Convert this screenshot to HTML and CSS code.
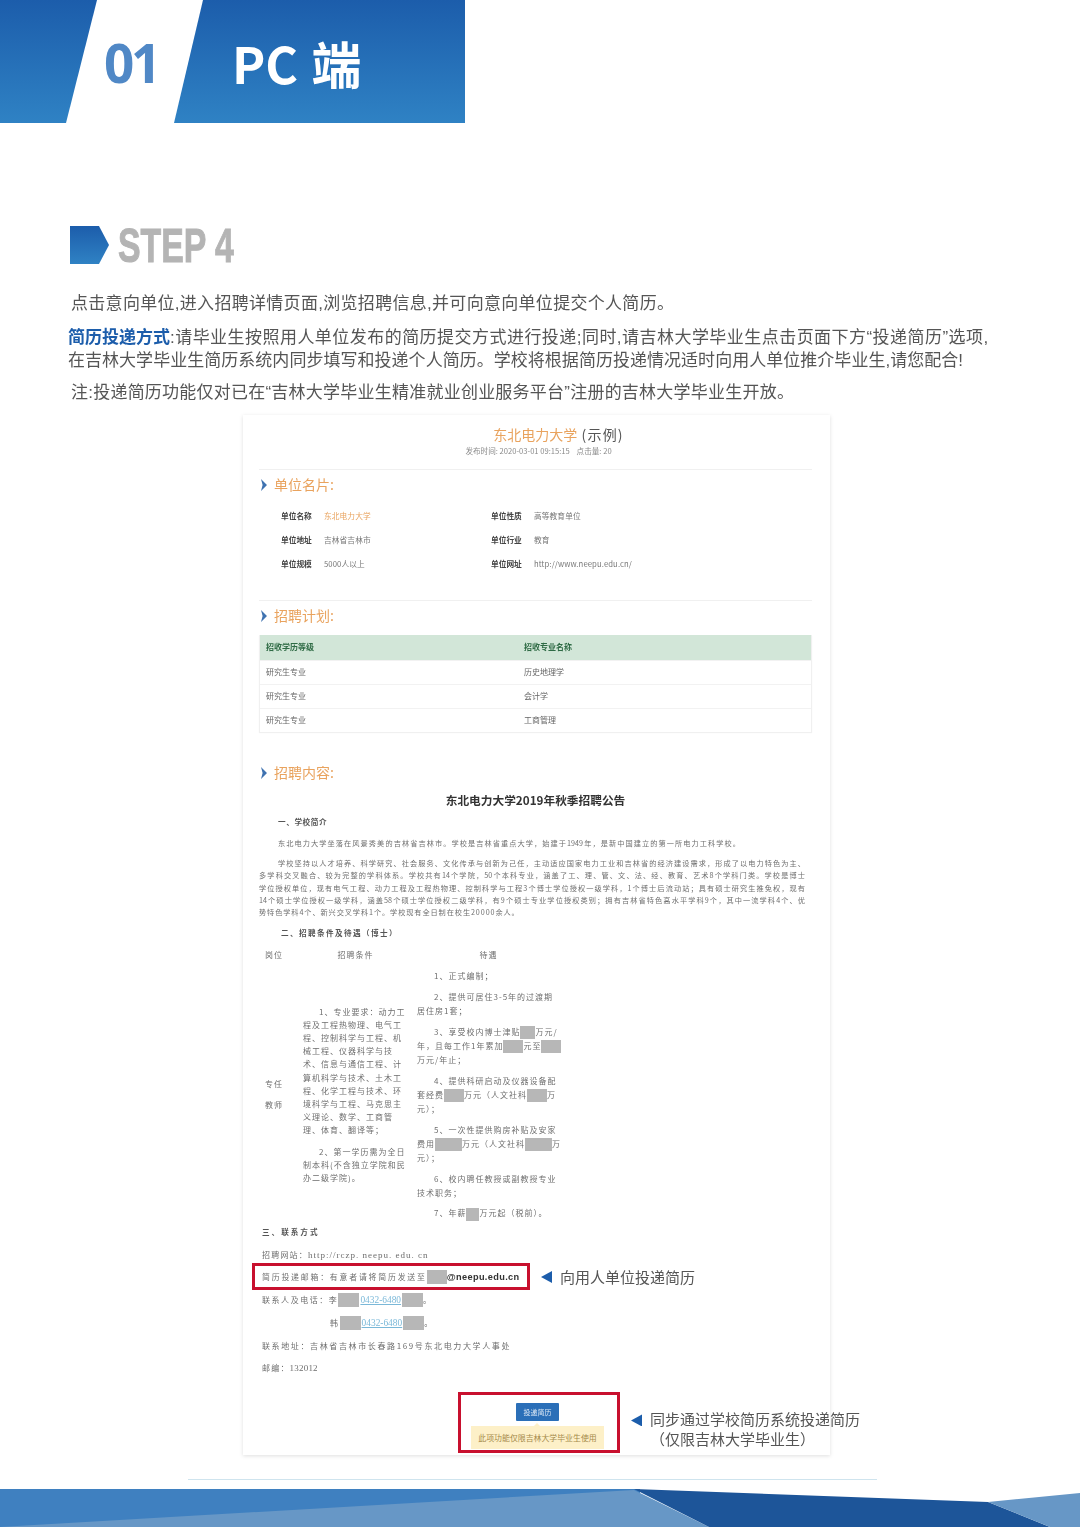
FILE: index.html
```html
<!DOCTYPE html>
<html lang="zh-CN">
<head>
<meta charset="utf-8">
<title>PC 端 STEP 4</title>
<link rel="stylesheet" href="styles.css">
</head>
<body>
<header class="banner">
  <div class="seg-left"></div>
  <div class="seg-num">01</div>
  <div class="seg-title">PC 端</div>
</header>

<div class="step">
  <div class="step-mark"></div>
  <div class="step-text">STEP 4</div>
</div>

<section class="intro">
  <p class="p1">点击意向单位,进入招聘详情页面,浏览招聘信息,并可向意向单位提交个人简历。</p>
  <p class="p2"><span class="l1"><b>简历投递方式</b>:请毕业生按照用人单位发布的简历提交方式进行投递;同时,请吉林大学毕业生点击页面下方“投递简历”选项,</span><br><span class="l2">在吉林大学毕业生简历系统内同步填写和投递个人简历。学校将根据简历投递情况适时向用人单位推介毕业生,请您配合!</span></p>
  <p class="p3">注:投递简历功能仅对已在“吉林大学毕业生精准就业创业服务平台”注册的吉林大学毕业生开放。</p>
</section>

<main class="card">
  <div class="title"><span class="org">东北电力大学</span><span class="ex"> (示例)</span></div>
  <div class="meta">发布时间: 2020-03-01 09:15:15 &nbsp;&nbsp; 点击量: 20</div>
  <hr class="rule r1">

  <h2 class="sec s1"><svg class="chev" viewBox="0 0 6 12"><path d="M0 0 L6 6 L0 12 L1.6 6 Z"/></svg>单位名片:</h2>
  <div class="info">
    <span class="k">单位名称</span><span class="v org">东北电力大学</span><span class="k">单位性质</span><span class="v">高等教育单位</span>
    <span class="k">单位地址</span><span class="v">吉林省吉林市</span><span class="k">单位行业</span><span class="v">教育</span>
    <span class="k">单位规模</span><span class="v">5000人以上</span><span class="k">单位网址</span><span class="v">http://www.neepu.edu.cn/</span>
  </div>
  <hr class="rule r2">

  <h2 class="sec s1"><svg class="chev" viewBox="0 0 6 12"><path d="M0 0 L6 6 L0 12 L1.6 6 Z"/></svg>招聘计划:</h2>
  <div class="plan">
    <div class="plan-row plan-head"><span>招收学历等级</span><span>招收专业名称</span></div>
    <div class="plan-row"><span>研究生专业</span><span>历史地理学</span></div>
    <div class="plan-row"><span>研究生专业</span><span>会计学</span></div>
    <div class="plan-row"><span>研究生专业</span><span>工商管理</span></div>
  </div>

  <h2 class="sec s3"><svg class="chev" viewBox="0 0 6 12"><path d="M0 0 L6 6 L0 12 L1.6 6 Z"/></svg>招聘内容:</h2>
  <h3 class="doc-title">东北电力大学2019年秋季招聘公告</h3>
  <div class="doc-h h1">一、学校简介</div>
  <div class="doc-p one"><span class="ln first short1">东北电力大学坐落在风景秀美的吉林省吉林市。学校是吉林省重点大学&#xFF0C;始建于1949年&#xFF0C;是新中国建立的第一所电力工科学校。</span></div>
  <div class="doc-p many">
    <div class="ln first">学校坚持以人才培养、科学研究、社会服务、文化传承与创新为己任&#xFF0C;主动适应国家电力工业和吉林省的经济建设需求&#xFF0C;形成了以电力特色为主、</div>
    <div class="ln">多学科交叉融合、较为完整的学科体系。学校共有14个学院&#xFF0C;50个本科专业&#xFF0C;涵盖了工、理、管、文、法、经、教育、艺术8个学科门类。学校是博士</div>
    <div class="ln">学位授权单位&#xFF0C;现有电气工程、动力工程及工程热物理、控制科学与工程3个博士学位授权一级学科&#xFF0C;1个博士后流动站&#xFF1B;具有硕士研究生推免权&#xFF0C;现有</div>
    <div class="ln">14个硕士学位授权一级学科&#xFF0C;涵盖58个硕士学位授权二级学科&#xFF0C;有9个硕士专业学位授权类别&#xFF1B;拥有吉林省特色高水平学科9个&#xFF0C;其中一流学科4个、优</div>
    <div class="ln-last">势特色学科4个、新兴交叉学科1个。学校现有全日制在校生20000余人。</div>
  </div>
  <div class="doc-h h2">二、招聘条件及待遇&#xFF08;博士&#xFF09;</div>
  <div class="jobs jobs-head"><span class="c1">岗位</span><span class="c2">招聘条件</span><span class="c3">待遇</span></div>
  <div class="jobs jobs-body">
    <div class="c1"><div>专任</div><div>教师</div></div>
    <div class="c2">
      <div class="in">1、专业要求&#xFF1A;动力工</div>
      <div>程及工程热物理、电气工</div>
      <div>程、控制科学与工程、机</div>
      <div>械工程、仪器科学与技</div>
      <div>术、信息与通信工程、计</div>
      <div>算机科学与技术、土木工</div>
      <div>程、化学工程与技术、环</div>
      <div>境科学与工程、马克思主</div>
      <div>义理论、数学、工商管</div>
      <div>理、体育、翻译等&#xFF1B;</div>
      <div class="in gap">2、第一学历需为全日</div>
      <div>制本科(不含独立学院和民</div>
      <div>办二级学院)。</div>
    </div>
    <div class="c3">
      <p><span class="in">1、正式编制&#xFF1B;</span></p>
      <p><span class="in">2、提供可居住3-5年的过渡期</span><br>居住房1套&#xFF1B;</p>
      <p><span class="in">3、享受校内博士津贴<i class="rd w15"></i>万元/</span><br>年&#xFF0C;且每工作1年累加<i class="rd w20"></i>元至<i class="rd w20"></i><br>万元/年止&#xFF1B;</p>
      <p><span class="in">4、提供科研启动及仪器设备配</span><br>套经费<i class="rd w20"></i>万元&#xFF08;人文社科<i class="rd w20"></i>万<br>元&#xFF09;&#xFF1B;</p>
      <p><span class="in">5、一次性提供购房补贴及安家</span><br>费用<i class="rd w27"></i>万元&#xFF08;人文社科<i class="rd w27"></i>万<br>元&#xFF09;&#xFF1B;</p>
      <p><span class="in">6、校内聘任教授或副教授专业</span><br>技术职务&#xFF1B;</p>
      <p><span class="in">7、年薪<i class="rd w13"></i>万元起&#xFF08;税前&#xFF09;。</span></p>
    </div>
  </div>

  <div class="doc-h h3">三、联系方式</div>
  <div class="ct site">招聘网站&#xFF1A;<span class="lat">http://rczp. neepu. edu. cn</span></div>
  <div class="flag-row mail-row">
    <div class="mail-box">简历投递邮箱&#xFF1A;有意者请将简历发送至<i class="rd w20 tall"></i><b class="at">@neepu.edu.cn</b></div>
    <i class="tri"></i>
    <div class="note">向用人单位投递简历</div>
  </div>
  <div class="ct phone">联系人及电话&#xFF1A;李<i class="rd w21 tall"></i><a class="tel">0432-6480</a><i class="rd w21 tall"></i>。</div>
  <div class="ct phone p2nd">韩<i class="rd w21 tall"></i><a class="tel">0432-6480</a><i class="rd w21 tall"></i>。</div>
  <div class="ct addr">联系地址&#xFF1A;吉林省吉林市长春路169号东北电力大学人事处</div>
  <div class="ct zip">邮编&#xFF1A;<span class="lat zipno">132012</span></div>

  <div class="flag-row apply-row">
    <div class="apply-box">
      <div class="apply-btn">投递简历</div>
      <div class="apply-tip">此项功能仅限吉林大学毕业生使用</div>
    </div>
    <i class="tri up"></i>
    <div class="note two">同步通过学校简历系统投递简历<br>&#xFF08;仅限吉林大学毕业生&#xFF09;</div>
  </div>
</main>

<div class="foot-line"></div>
<svg class="footer" viewBox="0 0 1080 38" preserveAspectRatio="none">
  <rect width="640" height="38" fill="#3f80c0"/>
  <polygon points="0,38 634,1 709,38" fill="#6797c6"/>
  <polygon points="634,0 988,13 1050,38 709,38" fill="#1d5599"/>
  <polygon points="988,13 1080,4 1080,38 1050,38" fill="#6797c6"/>
</svg>
</body>
</html>
```
FILE: styles.css
```css
* { box-sizing: border-box; }
html, body { margin: 0; padding: 0; }
body {
  width: 1080px;
  height: 1527px;
  overflow: hidden;
  background: #fff;
  font-family: "Noto Sans CJK SC", "Noto Sans", sans-serif;
}
p, h2, h3, hr { margin: 0; padding: 0; font-weight: normal; }
i { font-style: normal; }

/* banner */
.banner { display: flex; width: 465px; height: 123px; }
.seg-left, .seg-title { background: linear-gradient(#1c5dab, #2f82c4); }
.seg-left { width: 97px; clip-path: polygon(0 0, 100% 0, 66px 100%, 0 100%); }
.seg-num {
  width: 77px;
  padding-left: 7px;
  font: 700 53px/126px "Open Sans", sans-serif;
  letter-spacing: -3.2px;
  color: #5088c6;
}
.seg-title {
  flex: 1;
  padding-left: 58px;
  clip-path: polygon(29px 0, 100% 0, 100% 100%, 0 100%);
  font: 700 50px/125px "Noto Sans CJK SC", sans-serif;
  word-spacing: 2px;
  color: #fff;
  white-space: pre;
}

/* step */
.step { display: flex; align-items: center; gap: 9px; margin: 103px 0 0 70px; height: 38px; }
.step-mark {
  width: 39px; height: 38px;
  background: linear-gradient(#1c5dab, #2f82c4);
  clip-path: polygon(0 0, 29px 0, 100% 50%, 29px 100%, 0 100%);
}
.step-text {
  font: 700 49px/38px "Liberation Sans", sans-serif;
  color: #b4b4b4;
  -webkit-text-stroke: 1px #b4b4b4;
  transform: scaleX(.69);
  transform-origin: left center;
  white-space: nowrap;
}

/* intro */
.intro {
  margin-top: 28px;
  font-family: "Liberation Sans", "Noto Sans CJK SC", sans-serif;
  font-size: 17px;
  line-height: 23px;
  color: #555;
  white-space: nowrap;
  filter: blur(0.3px);
}
.p1 { padding-left: 71px; letter-spacing: .3px; }
.p2 { padding-left: 68px; margin-top: 11px; }
.l1 { letter-spacing: .46px; }
.l2 { letter-spacing: .03px; }
.p2 b { color: #1c5dab; font-weight: 700; letter-spacing: 0; }
.p3 { padding-left: 71px; margin-top: 9px; letter-spacing: .23px; }

/* card */
.card {
  width: 587px;
  height: 1040px;
  margin: 11px 0 0 243px;
  padding: 9px 18px 0 16px;
  background: #fff;
  box-shadow: 0 1px 4px rgba(0, 0, 0, .13);
  filter: blur(0.35px);
  color: #666;
}
.org { color: #e9a35e; }
.title { font-size: 14px; line-height: 20px; text-align: center; color: #555; padding-left: 46px; }
.ex { letter-spacing: 1.2px; }
.meta { margin-top: 1px; padding-left: 6px; font-size: 7.6px; line-height: 12px; text-align: center; color: #8a8a8a; }
.rule { border: 0; border-top: 1px solid #f0f0f0; }
.r1 { margin-top: 12px; }
.r2 { margin-top: 25px; }
.sec { display: flex; align-items: center; gap: 7px; padding: 0 0 2px 2px; height: 20px; font-size: 14px; line-height: 18px; color: #e9a35e; }
.s1 { margin-top: 5px; }
.s3 { margin-top: 31px; }
.chev { width: 6px; height: 12px; flex: none; margin-top: 2px; }
.chev path { fill: #3f72b0; }

.info {
  display: grid;
  grid-template-columns: 43px 167px 43px auto;
  grid-auto-rows: 24px;
  align-items: center;
  margin-top: 8px;
  padding-left: 22px;
  font-size: 7.7px;
  white-space: nowrap;
}
.k { font-weight: 700; color: #444; }
.v { color: #777; letter-spacing: .1px; }
.v.org { color: #e9a35e; }

.plan { margin-top: 9px; width: 553px; border: 1px solid #f0f0f0; border-top: 0; border-bottom: 0; box-shadow: 0 1px 1px rgba(0,0,0,.06); }
.plan-row {
  display: grid;
  grid-template-columns: 258px auto;
  align-items: center;
  height: 24px;
  padding: 0 0 2px 6px;
  font-size: 8px;
  color: #666;
  border-top: 1px solid #f2f2f2;
}
.plan-head { height: 25px; background: #d2e6d8; color: #2f6b45; border-top: 0; font-weight: 700; }

/* document */
.doc-title { margin-top: 9px; font-size: 11.7px; line-height: 16px; font-weight: 700; text-align: center; color: #333; }
.doc-h { font-size: 7.6px; line-height: 12px; font-weight: 700; color: #555; white-space: nowrap; }
.h1 { margin-top: 8px; padding-left: 19px; letter-spacing: .6px; }
.h2 { margin-top: 9px; padding-left: 22px; letter-spacing: 1.4px; }
.h3 { margin-top: 8px; padding-left: 3px; letter-spacing: 2px; }
.doc-p { width: 546px; font-size: 7.2px; letter-spacing: .4px; color: #6e6e6e; white-space: nowrap; }
.one { margin-top: 9px; line-height: 12px; }
.many { margin-top: 8px; line-height: 12.3px; }
.ln { display: block; text-align: justify; text-align-last: justify; white-space: normal; letter-spacing: 0; }
.ln.first { margin-left: 19px; }
.short1 { width: 462px; }
.ln-last { letter-spacing: .9px; }
.jobs { display: grid; grid-template-columns: 44px 105px 143px; column-gap: 0; font-size: 8px; letter-spacing: 1px; color: #6e6e6e; white-space: nowrap; }
.jobs .c3 { margin-left: 9px; }
.jobs-head { margin-top: 10px; line-height: 12px; }
.jobs-head .c1 { padding-left: 6px; }
.jobs-head .c2 { text-align: center; }
.jobs-head .c3 { text-align: center; width: 143px; }
.jobs-body { grid-template-columns: 44px 105px 152px; margin-top: 8px; height: 249px; }
.jobs-body .c1 { align-self: center; padding: 0 0 8px 6px; line-height: 21px; }
.jobs-body .c2 { align-self: center; padding-bottom: 8px; line-height: 13.2px; }
.jobs-body .c3 { line-height: 14px; }
.jobs-body .c3 p { margin-bottom: 6.6px; }
.in { padding-left: 16px; display: inline-block; }
.jobs-body .c3 .in { padding-left: 17px; }
.gap { margin-top: 8px; }
.rd { display: inline-block; height: 13px; background: #b7b7b7; vertical-align: middle; }
.rd.tall { height: 14px; }
.w13 { width: 13px; } .w15 { width: 15px; } .w20 { width: 20px; } .w21 { width: 21px; } .w27 { width: 27px; }

/* contact */
.ct { padding-left: 3px; font-size: 8px; line-height: 12px; letter-spacing: 1.2px; color: #6e6e6e; white-space: nowrap; }
.lat { font-family: "Liberation Serif", serif; font-size: 9px; letter-spacing: 1px; }
.zipno { letter-spacing: .2px; }
.site { margin-top: 11px; }
.phone { margin-top: 4px; height: 12px; display: flex; align-items: center; letter-spacing: 1.55px; }
.p2nd { margin-top: 11px; padding-left: 71px; }
.addr { margin-top: 11px; letter-spacing: 1.62px; }
.zip { margin-top: 10px; }
.tel { color: #7ab8d8; text-decoration: underline; font-family: "Liberation Serif", serif; font-size: 9.4px; letter-spacing: 0; padding: 0 1px; }

.flag-row { display: flex; align-items: center; white-space: nowrap; }
.mail-row { margin: 2px 0 0 -7px; height: 27px; }
.mail-box {
  flex: none;
  display: flex; align-items: center;
  width: 278px; height: 27px;
  padding-left: 7px;
  border: 3px solid #c8102e;
  font-size: 7.9px; letter-spacing: 1.8px; color: #6e6e6e;
}
.at { font: 700 9.2px "Liberation Sans", sans-serif; letter-spacing: .35px; color: #333; }
.tri {
  flex: none;
  width: 11px; height: 12px;
  margin-left: 11px;
  background: #1c5dab;
  clip-path: polygon(0 50%, 100% 0, 100% 100%);
}
.tri.up { margin-top: -5px; }
.note { margin-left: 8px; font-size: 15px; line-height: 20px; color: #555; white-space: nowrap; flex: none; }
.note.two { line-height: 20px; padding-top: 13px; }
.apply-row { margin: 18px 0 0 199px; height: 61px; }
.apply-box {
  flex: none;
  display: flex; flex-direction: column; align-items: center;
  width: 162px; height: 61px;
  padding: 8px 3px 0 0;
  border: 3px solid #c8102e;
}
.apply-btn { width: 43px; height: 18px; background: #2b6fb8; color: #dfeaf6; font-size: 7px; line-height: 18px; text-align: center; border-radius: 1px; }
.apply-tip {
  position: relative;
  width: 133px; height: 23px;
  margin-top: 5px;
  background: #fdf0c8;
  color: #a58a4a;
  font-size: 7.9px;
  line-height: 23px;
  text-align: center;
}
.apply-tip::before {
  content: "";
  position: absolute;
  left: 63px; top: -3px;
  border: 3px solid transparent;
  border-top: 0;
  border-bottom-color: #fdf0c8;
}

/* foot */
.foot-line { width: 689px; height: 1px; margin: 24px 0 0 188px; background: #cfe4ee; }
.footer { display: block; width: 1080px; height: 38px; margin-top: 9px; }
```
